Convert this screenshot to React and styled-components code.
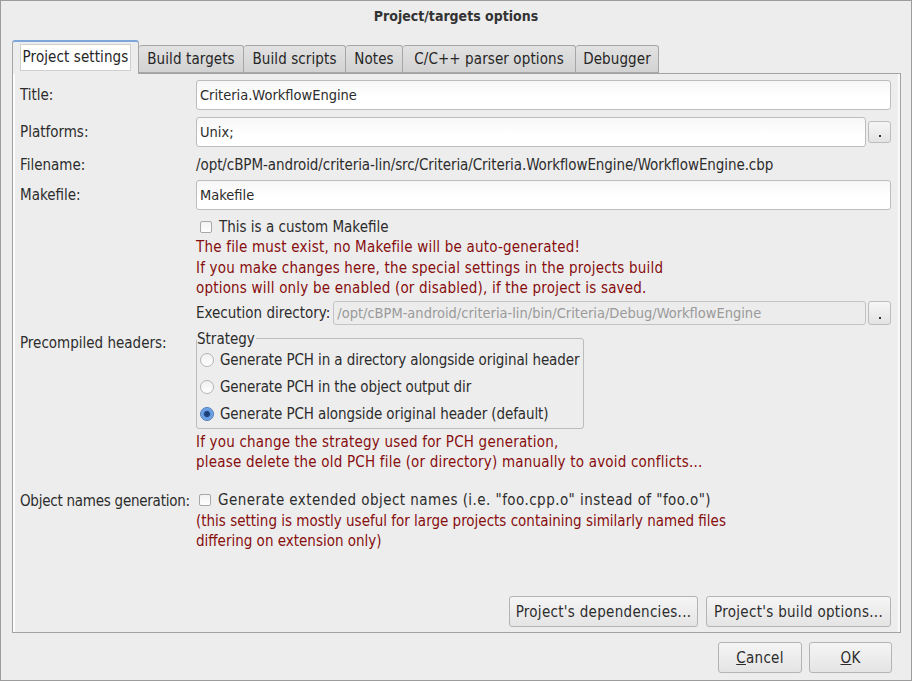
import React from "react";
import styled, { createGlobalStyle } from "styled-components";

const Global = createGlobalStyle`
  html, body { margin: 0; padding: 0; background: #ededed; }
  body {
    font-family: "DejaVu Sans Condensed", "DejaVu Sans", sans-serif;
    font-stretch: condensed;
    font-size: 15px;
    color: #2c2c2c;
  }
  * { box-sizing: border-box; }
`;

const Window = styled.div`
  width: 912px;
  height: 681px;
  border: 1px solid #9c9c9c;
  background: #ededed;
  display: flex;
  flex-direction: column;
`;

const TitleBar = styled.div`
  height: 32px;
  line-height: 30px;
  text-align: center;
  font-weight: bold;
  font-size: 14px;
  color: #333;
`;

const Body = styled.div`
  flex: 1;
  display: flex;
  flex-direction: column;
  padding: 7px 10px 0 11px;
`;

const TabBar = styled.div`
  display: flex;
  align-items: flex-end;
  height: 33px;
  position: relative;
  z-index: 1;
`;

const Tab = styled.div`
  width: ${(p) => p.w}px;
  height: ${(p) => (p.active ? 34 : 28)}px;
  margin-bottom: ${(p) => (p.active ? -1 : 0)}px;
  display: flex;
  align-items: center;
  justify-content: center;
  border: 1px solid #a6a6a6;
  border-bottom: ${(p) => (p.active ? "none" : "1px solid #a6a6a6")};
  border-top: ${(p) => (p.active ? "2px solid #7ea6da" : "1px solid #a6a6a6")};
  border-left-width: ${(p) => (p.first ? 1 : 0)}px;
  border-radius: 3px 3px 0 0;
  background: ${(p) =>
    p.active ? "#ededed" : "linear-gradient(to bottom, #e2e2e2, #d2d2d2)"};
  color: #262626;
  letter-spacing: 0.1px;
  white-space: nowrap;
`;

const FocusBox = styled.span`
  background: #fff;
  border: 1px solid #cfcfcf;
  padding: 3px 2px 4px;
  margin-top: -2px;
`;

const Pane = styled.div`
  height: 560px;
  border: 1px solid #a2a2a2;
  box-shadow: inset 2px 0 0 #fdfdfd, inset -2px 0 0 #fafafa;
  display: flex;
  flex-direction: column;
  padding: 6px 9px 5px 7px;
`;

const Row = styled.div`
  display: flex;
  align-items: ${(p) => (p.top ? "flex-start" : "center")};
  height: ${(p) => (p.h ? `${p.h}px` : "auto")};
  margin-top: ${(p) => p.mt || 0}px;
  padding-top: ${(p) => p.pt || 0}px;
`;

const Label = styled.div`
  width: 176px;
  flex: none;
  padding-top: ${(p) => p.pt || 0}px;
  letter-spacing: ${(p) => (p.tight ? -0.25 : 0)}px;
  white-space: nowrap;
`;

const Field = styled.div`
  flex: 1;
  min-width: 0;
  display: flex;
  align-items: center;
  gap: 2px;
  align-self: stretch;
`;

const ExecField = styled(Field)`
  flex: none;
  height: 24px;
  margin-top: 2px;
`;

const FieldCol = styled.div`
  flex: 1;
  min-width: 0;
  display: flex;
  flex-direction: column;
`;

const Input = styled.div`
  flex: 1;
  height: ${(p) => p.h || 30}px;
  border: 1px solid ${(p) => (p.disabled ? "#c4c4c4" : "#bdbdbd")};
  border-radius: 3px;
  background: ${(p) =>
    p.disabled ? "#ececec" : "linear-gradient(to bottom, #f7f7f7, #ffffff 60%)"};
  color: ${(p) => (p.disabled ? "#9a9a9a" : "#2c2c2c")};
  font-size: 14.5px;
  display: flex;
  align-items: center;
  padding-left: 3px;
  white-space: nowrap;
  overflow: hidden;
`;

const DotButton = styled.div`
  width: 23px;
  height: ${(p) => p.h || 22}px;
  flex: none;
  border: 1px solid #bdbdbd;
  border-radius: 3px;
  background: linear-gradient(to bottom, #f6f6f6, #e3e3e3);
  display: flex;
  align-items: flex-end;
  justify-content: center;
  padding-bottom: 5px;
  &::after {
    content: "";
    width: 2px;
    height: 2px;
    background: #333;
  }
`;

const PlainText = styled.div`
  white-space: nowrap;
  letter-spacing: -0.08px;
`;

const Check = styled.span`
  width: 12px;
  height: 12px;
  flex: none;
  border: 1px solid #a8a8a8;
  border-radius: 2px;
  background: linear-gradient(to bottom, #f2f2f2, #ffffff);
  margin: 0 7px 0 ${(p) => p.ml || 4}px;
`;

const CheckRow = styled.div`
  display: flex;
  align-items: center;
  height: ${(p) => p.h || 21}px;
  letter-spacing: ${(p) => p.ls || 0}px;
  white-space: nowrap;
`;

const Warn = styled.div`
  color: #870e0e;
  line-height: 20.5px;
  letter-spacing: ${(p) => (p.ls !== undefined ? p.ls : 0.2)}px;
  white-space: nowrap;
  margin-top: ${(p) => p.mt || 0}px;
`;

const ExecLabel = styled.span`
  margin-right: 1px;
  white-space: nowrap;
`;

const Group = styled.fieldset`
  width: 388px;
  min-width: 0;
  height: 98px;
  margin: 0;
  padding: 0 0 0 3px;
  border: 1px solid #bcbcbc;
  border-radius: 3px;
`;

const Legend = styled.legend`
  padding: 0 1px 0 0;
  margin-left: -3px;
  line-height: 16px;
  color: #2c2c2c;
`;

const RadioRow = styled.div`
  display: flex;
  align-items: center;
  height: 27px;
  letter-spacing: -0.1px;
  white-space: nowrap;
`;

const Radio = styled.span`
  width: 14px;
  height: 14px;
  flex: none;
  border-radius: 50%;
  margin-right: 6px;
  border: 1px solid ${(p) => (p.checked ? "#4a78b8" : "#b4b4b4")};
  background: ${(p) =>
    p.checked
      ? "radial-gradient(circle at 50% 50%, #1d3f7a 0 2.5px, #5d95e0 3.5px, #9cc2f0 100%)"
      : "linear-gradient(to bottom, #f0f0f0, #ffffff)"};
`;

const Spacer = styled.div`
  flex: 1;
`;

const ButtonRow = styled.div`
  display: flex;
  justify-content: flex-end;
  gap: ${(p) => p.gap || 8}px;
  padding-right: ${(p) => p.pr || 0}px;
  margin-top: ${(p) => p.mt || 0}px;
`;

const Button = styled.div`
  width: ${(p) => p.w}px;
  height: 31px;
  border: 1px solid #b4b4b4;
  border-radius: 3px;
  background: linear-gradient(to bottom, #f5f5f5, #e4e4e4);
  display: flex;
  align-items: center;
  justify-content: center;
  white-space: nowrap;
  color: #2c2c2c;
  letter-spacing: 0.3px;
`;

const U = styled.span`
  text-decoration: underline;
`;

const tabs = [
  { t: "Project settings", w: 127, active: true },
  { t: "Build targets", w: 105 },
  { t: "Build scripts", w: 102 },
  { t: "Notes", w: 57 },
  { t: "C/C++ parser options", w: 173 },
  { t: "Debugger", w: 83 },
];

export default function App() {
  return (
    <>
      <Global />
      <Window>
        <TitleBar>Project/targets options</TitleBar>
        <Body>
          <TabBar>
            {tabs.map((tb, i) => (
              <Tab key={tb.t} w={tb.w} active={tb.active} first={i === 0}>
                {tb.active ? <FocusBox>{tb.t}</FocusBox> : tb.t}
              </Tab>
            ))}
          </TabBar>
          <Pane>
            <Row h={30}>
              <Label>Title:</Label>
              <Field>
                <Input>Criteria.WorkflowEngine</Input>
              </Field>
            </Row>
            <Row h={30} mt={7}>
              <Label>Platforms:</Label>
              <Field>
                <Input>Unix;</Input>
                <DotButton />
              </Field>
            </Row>
            <Row h={33} pt={3}>
              <Label>Filename:</Label>
              <PlainText>
                /opt/cBPM-android/criteria-lin/src/Criteria/Criteria.WorkflowEngine/WorkflowEngine.cbp
              </PlainText>
            </Row>
            <Row h={30}>
              <Label>Makefile:</Label>
              <Field>
                <Input>Makefile</Input>
              </Field>
            </Row>
            <Row top mt={6}>
              <Label />
              <FieldCol>
                <CheckRow>
                  <Check />
                  This is a custom Makefile
                </CheckRow>
                <Warn>
                  The file must exist, no Makefile will be auto-generated!
                  <br />
                  If you make changes here, the special settings in the projects build
                  <br />
                  options will only be enabled (or disabled), if the project is saved.
                </Warn>
                <ExecField>
                  <ExecLabel>Execution directory:</ExecLabel>
                  <Input disabled h={24}>
                    /opt/cBPM-android/criteria-lin/bin/Criteria/Debug/WorkflowEngine
                  </Input>
                  <DotButton h={24} />
                </ExecField>
              </FieldCol>
            </Row>
            <Row top mt={6}>
              <Label pt={3}>Precompiled headers:</Label>
              <FieldCol>
                <Group>
                  <Legend>Strategy</Legend>
                  <RadioRow>
                    <Radio />
                    Generate PCH in a directory alongside original header
                  </RadioRow>
                  <RadioRow>
                    <Radio />
                    Generate PCH in the object output dir
                  </RadioRow>
                  <RadioRow>
                    <Radio checked />
                    Generate PCH alongside original header (default)
                  </RadioRow>
                </Group>
                <Warn mt={3}>
                  If you change the strategy used for PCH generation,
                  <br />
                  please delete the old PCH file (or directory) manually to avoid conflicts...
                </Warn>
              </FieldCol>
            </Row>
            <Row top mt={17}>
              <Label pt={2} tight>
                Object names generation:
              </Label>
              <FieldCol>
                <CheckRow h={20} ls={0.45}>
                  <Check ml={3} />
                  Generate extended object names (i.e. "foo.cpp.o" instead of "foo.o")
                </CheckRow>
                <Warn mt={1} ls={0}>
                  (this setting is mostly useful for large projects containing similarly named files
                  <br />
                  differing on extension only)
                </Warn>
              </FieldCol>
            </Row>
            <Spacer />
            <ButtonRow gap={8}>
              <Button w={189}>Project's dependencies...</Button>
              <Button w={185}>Project's build options...</Button>
            </ButtonRow>
          </Pane>
          <ButtonRow gap={7} pr={9} mt={9}>
            <Button w={84}>
              <U>C</U>ancel
            </Button>
            <Button w={83}>
              <U>O</U>K
            </Button>
          </ButtonRow>
        </Body>
      </Window>
    </>
  );
}
